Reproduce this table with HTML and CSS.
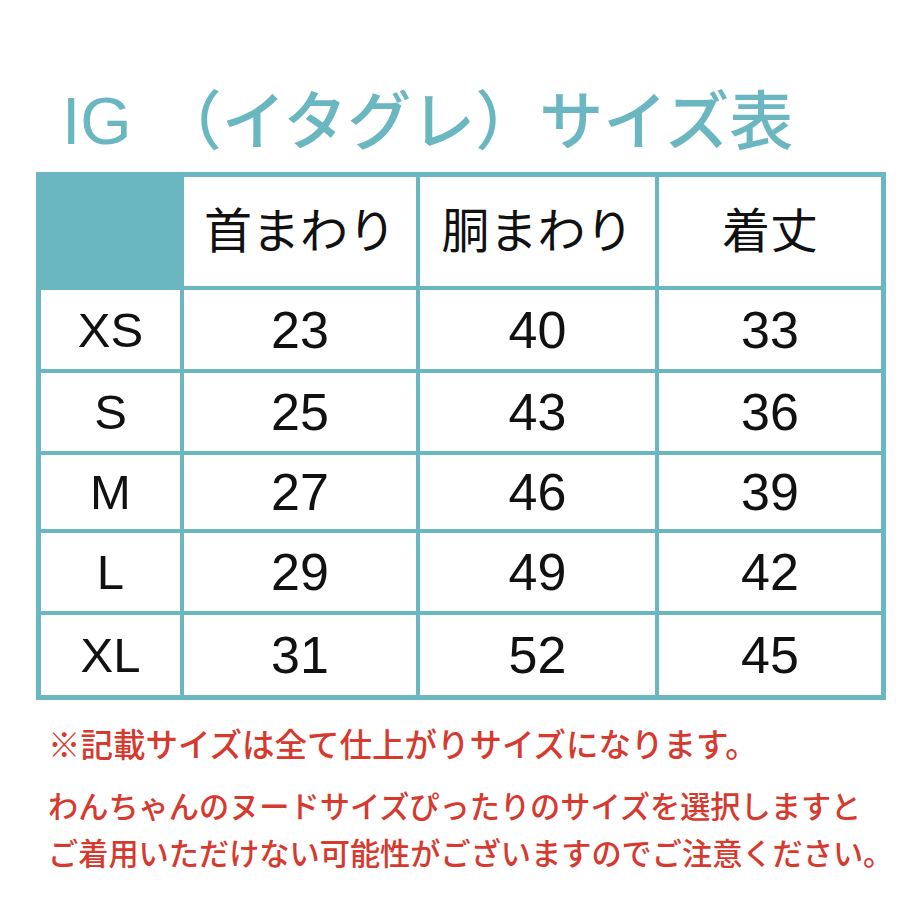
FILE: index.html
```html
<!DOCTYPE html>
<html lang="ja">
<head>
<meta charset="utf-8">
<link rel="stylesheet" href="styles.css">
</head>
<body>
<div class="page">
  <h1 class="title"><span class="ig">IG</span>（イタグレ）サイズ表</h1>
  <div class="size-table">
    <div class="cell corner"></div>
    <div class="cell head">首まわり</div>
    <div class="cell head">胴まわり</div>
    <div class="cell head">着丈</div>

    <div class="cell label">XS</div>
    <div class="cell num">23</div>
    <div class="cell num">40</div>
    <div class="cell num">33</div>

    <div class="cell label">S</div>
    <div class="cell num">25</div>
    <div class="cell num">43</div>
    <div class="cell num">36</div>

    <div class="cell label">M</div>
    <div class="cell num">27</div>
    <div class="cell num">46</div>
    <div class="cell num">39</div>

    <div class="cell label">L</div>
    <div class="cell num">29</div>
    <div class="cell num">49</div>
    <div class="cell num">42</div>

    <div class="cell label">XL</div>
    <div class="cell num">31</div>
    <div class="cell num">52</div>
    <div class="cell num">45</div>
  </div>
  <div class="notes">
    <p class="note first">※記載サイズは全て仕上がりサイズになります。</p>
    <p class="note">わんちゃんのヌードサイズぴったりのサイズを選択しますと<br>ご着用いただけない可能性がございますのでご注意ください。</p>
  </div>
</div>
</body>
</html>
```

FILE: styles.css
```css
html, body {
  margin: 0;
  padding: 0;
  background: #ffffff;
}

.page {
  width: 920px;
  height: 920px;
  box-sizing: border-box;
  padding: 78px 0 0 36px;
  font-family: "Noto Sans CJK JP", sans-serif;
}

.title {
  margin: 0;
  padding-left: 26px;
  height: 94px;
  font-size: 64px;
  line-height: 76px;
  font-weight: 500;
  color: #6bb7c1;
  white-space: nowrap;
}

.ig {
  font-family: "Liberation Sans", Arial, sans-serif;
  font-weight: 400;
  font-size: 66px;
  margin-right: 26px;
}

.size-table {
  width: 850px;
  box-sizing: border-box;
  display: grid;
  grid-template-columns: 139px 232px 235px 222px;
  grid-template-rows: 109px 79px 78px 74px 78px 80px;
  gap: 4px;
  padding: 5px;
  background: #6bb7c1;
}

.cell {
  background: #ffffff;
  display: flex;
  align-items: center;
  justify-content: center;
  color: #111111;
}

.cell.corner {
  background: #6bb7c1;
}

.cell.head {
  font-family: "Noto Sans CJK JP", sans-serif;
  font-size: 48px;
  font-weight: 400;
  padding-bottom: 10px;
}

.cell.label {
  font-family: "Liberation Sans", Arial, sans-serif;
  font-size: 49px;
}

.cell.num {
  font-family: "Liberation Sans", Arial, sans-serif;
  font-size: 52px;
}

.notes {
  padding: 19px 0 0 12px;
  color: #d63a2f;
  font-weight: 500;
}

.note {
  margin: 0;
  font-size: 30.2px;
  line-height: 47px;
  white-space: nowrap;
}

.note.first {
  font-size: 32.5px;
  margin-bottom: 16px;
}
```
